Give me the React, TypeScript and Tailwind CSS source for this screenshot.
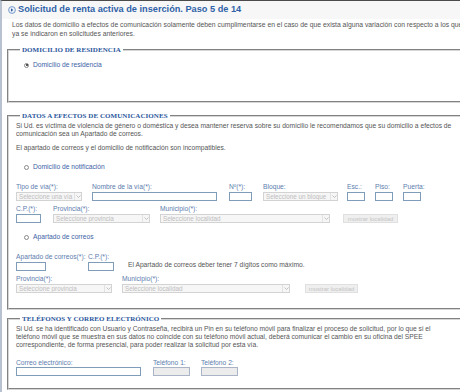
import React from "react";

const sans = "font-['Liberation_Sans',Arial,sans-serif]";

function Radio({ checked, label }: { checked?: boolean; label: string }) {
  return (
    <div className="flex items-center h-[8px] ml-[8px]">
      <span className="flex items-center justify-center w-[5px] h-[5px] rounded-full border border-[#8a8a8a] bg-white">
        {checked && <span className="w-[2px] h-[2px] rounded-full bg-[#222]" />}
      </span>
      <span className="ml-[4px] text-[6.7px] leading-[8px] text-[#3d62a6]">{label}</span>
    </div>
  );
}

function Label({ children }: { children: React.ReactNode }) {
  return <div className="h-[8px] text-[6.7px] leading-[8px] text-[#5d7cae] whitespace-nowrap">{children}</div>;
}

function Input({ className }: { className: string }) {
  return <div className={"h-[9px] border border-[#7f9db9] bg-white " + className} />;
}

function Select({ className, text }: { className: string; text: string }) {
  return (
    <div className={"flex h-[9px] items-stretch border border-[#d3d3d3] bg-[#f6f6f6] " + className}>
      <span className="flex-1 pl-[2px] text-[6.3px] leading-[7px] text-[#bdbdbd] whitespace-nowrap overflow-hidden">{text}</span>
      <span className="flex w-[7px] items-center justify-center border-l border-[#e2e2e2]">
        <svg width="5" height="3" viewBox="0 0 5 3">
          <path d="M0.5 0.5 L2.5 2.5 L4.5 0.5" fill="none" stroke="#b5b5b5" strokeWidth="0.8" />
        </svg>
      </span>
    </div>
  );
}

function Btn({ className }: { className: string }) {
  return (
    <div className={"flex h-[9px] items-center justify-center border border-[#e0e0e0] bg-[#efefef] text-[6px] leading-none text-[#c4c4c4] " + className}>
      mostrar localidad
    </div>
  );
}

function Legend({ children }: { children: React.ReactNode }) {
  return (
    <legend className="ml-[4px] px-[2px] font-['Liberation_Serif','Times_New_Roman',serif] font-bold text-[7px] leading-[8px] text-[#2b579c] tracking-[0.05px]">
      {children}
    </legend>
  );
}

const fs = "ml-[5px] w-[480px] border-2 [border-style:groove] border-[#d6d6d6] pl-[7px] min-w-0";

export default function App() {
  return (
    <div className={"w-[460px] h-[392px] overflow-hidden bg-white border-t border-[#4b4b4b] border-l-2 border-l-[#b8c1cf] " + sans}>
      {/* Title */}
      <div className="flex items-center h-[18px] bg-[#f7f7f7] pl-[6px]">
        <svg width="8" height="8" viewBox="0 0 8 8">
          <circle cx="4" cy="4" r="3.4" fill="#eaf1fa" stroke="#5e86bd" strokeWidth="0.8" />
          <path d="M3 2.2 L5.2 4 L3 5.8 Z" fill="#2e5a9c" />
        </svg>
        <span className="ml-[2px] text-[9.2px] font-bold text-[#2f62a8] whitespace-nowrap">
          Solicitud de renta activa de inserción. Paso 5 de 14
        </span>
      </div>

      {/* Intro */}
      <div className="pl-[10px] pt-[1px] h-[27px] text-[6.8px] leading-[9px] text-[#555] whitespace-nowrap">
        Los datos de domicilio a efectos de comunicación solamente deben cumplimentarse en el caso de que exista alguna variación con respecto a los que
        <br />
        ya se indicaron en solicitudes anteriores.
      </div>

      {/* Domicilio de residencia */}
      <fieldset className={fs + " h-[57px]"}>
        <Legend>DOMICILIO DE RESIDENCIA</Legend>
        <div className="pt-[7px]">
          <Radio checked label="Domicilio de residencia" />
        </div>
      </fieldset>

      {/* Datos a efectos de comunicaciones */}
      <fieldset className={fs + " mt-[9px] pb-[15px]"}>
        <Legend>DATOS A EFECTOS DE COMUNICACIONES</Legend>
        <div className="mt-[2px] text-[6.7px] leading-[8px] text-[#555] whitespace-nowrap">
          Si Ud. es víctima de violencia de género o doméstica y desea mantener reserva sobre su domicilio le recomendamos que su domicilio a efectos de
          <br />
          comunicación sea un Apartado de correos.
        </div>
        <div className="mt-[6px] text-[6.7px] leading-[8px] text-[#555] whitespace-nowrap">
          El apartado de correos y el domicilio de notificación son incompatibles.
        </div>
        <div className="mt-[11px]">
          <Radio label="Domicilio de notificación" />
        </div>

        <div className="mt-[12px] flex">
          <div className="w-[76px]">
            <Label>Tipo de vía(*):</Label>
            <Select className="mt-[1px] w-[66px]" text="Seleccione una vía" />
          </div>
          <div className="w-[137px]">
            <Label>Nombre de la vía(*):</Label>
            <Input className="mt-[1px] w-[125px]" />
          </div>
          <div className="w-[34px]">
            <Label>Nº(*):</Label>
            <Input className="mt-[1px] w-[23px]" />
          </div>
          <div className="w-[84px]">
            <Label>Bloque:</Label>
            <Select className="mt-[1px] w-[75px]" text="Seleccione un bloque" />
          </div>
          <div className="w-[28px]">
            <Label>Esc.:</Label>
            <Input className="mt-[1px] w-[18px]" />
          </div>
          <div className="w-[28px]">
            <Label>Piso:</Label>
            <Input className="mt-[1px] w-[18px]" />
          </div>
          <div className="w-[28px]">
            <Label>Puerta:</Label>
            <Input className="mt-[1px] w-[18px]" />
          </div>
        </div>

        <div className="mt-[4px] flex items-end">
          <div className="w-[37px]">
            <Label>C.P.(*):</Label>
            <Input className="mt-[1px] w-[25px]" />
          </div>
          <div className="w-[107px]">
            <Label>Provincia(*):</Label>
            <Select className="mt-[1px] w-[97px]" text="Seleccione provincia" />
          </div>
          <div className="w-[183px]">
            <Label>Municipio(*):</Label>
            <Select className="mt-[1px] w-[170px]" text="Seleccione localidad" />
          </div>
          <Btn className="w-[55px]" />
        </div>

        <div className="mt-[10px]">
          <Radio label="Apartado de correos" />
        </div>

        <div className="mt-[12px] flex items-end">
          <div className="w-[72px]">
            <Label>Apartado de correos(*):</Label>
            <Input className="mt-[1px] w-[30px]" />
          </div>
          <div className="w-[40px]">
            <Label>C.P.(*):</Label>
            <Input className="mt-[1px] w-[26px]" />
          </div>
          <div className="h-[10px] text-[6.7px] leading-[8px] text-[#555] whitespace-nowrap">
            El Apartado de correos deber tener 7 dígitos como máximo.
          </div>
        </div>

        <div className="mt-[4px] flex items-end">
          <div className="w-[106px]">
            <Label>Provincia(*):</Label>
            <Select className="mt-[1px] w-[96px]" text="Seleccione provincia" />
          </div>
          <div className="w-[183px]">
            <Label>Municipio(*):</Label>
            <Select className="mt-[1px] w-[168px]" text="Seleccione localidad" />
          </div>
          <Btn className="w-[53px]" />
        </div>
      </fieldset>

      {/* Teléfonos */}
      <fieldset className={fs + " mt-[5px] pb-[12px]"}>
        <Legend>TELÉFONOS Y CORREO ELECTRÓNICO</Legend>
        <div className="mt-[2px] text-[6.7px] leading-[8px] text-[#555] whitespace-nowrap">
          Si Ud. se ha identificado con Usuario y Contraseña, recibirá un Pin en su teléfono móvil para finalizar el proceso de solicitud, por lo que si el
          <br />
          teléfono móvil que se muestra en sus datos no coincide con su teléfono móvil actual, deberá comunicar el cambio en su oficina del SPEE
          <br />
          correspondiente, de forma presencial, para poder realizar la solicitud por esta vía.
        </div>
        <div className="mt-[10px] flex">
          <div className="w-[137px]">
            <Label>Correo electrónico:</Label>
            <Input className="w-[125px]" />
          </div>
          <div className="w-[48px]">
            <Label>Teléfono 1:</Label>
            <div className="h-[9px] w-[37px] border border-[#a9b5c6] bg-[#ececec]" />
          </div>
          <div className="w-[48px]">
            <Label>Teléfono 2:</Label>
            <div className="h-[9px] w-[37px] border border-[#a9b5c6] bg-[#ececec]" />
          </div>
        </div>
      </fieldset>

      <div className="mt-[4px] pl-[6px] text-[6.7px] leading-[8px] text-[#555] whitespace-nowrap">
        (*) dato obligatorio
      </div>
    </div>
  );
}
